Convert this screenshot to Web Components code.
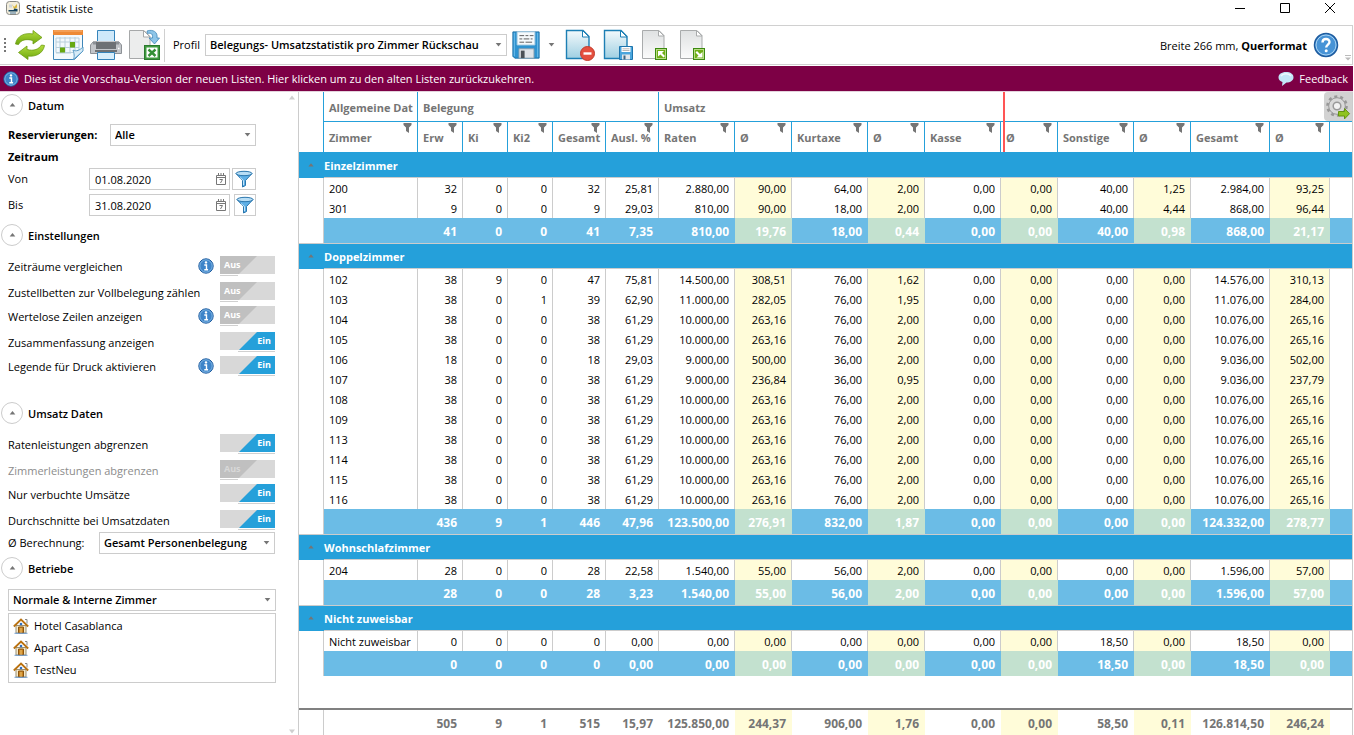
<!DOCTYPE html>
<html lang="de">
<head>
<meta charset="utf-8">
<title>Statistik Liste</title>
<style>
  html, body { margin: 0; height: 100%; }
  body { font: 11px/16px "Open Sans", "Noto Sans", sans-serif; color: #000; background: #fff; }
</style>
</head>
<body>
<statistics-app></statistics-app>

<script>
const base = `
  *, *::before, *::after { box-sizing: border-box; }
  button, input, select { font: inherit; color: inherit; margin: 0; }
  button { border: 0; padding: 0; background: none; display: flex; align-items: center; justify-content: center; cursor: pointer; }
`;

function define(name, html, setup) {
  const template = document.createElement('template');
  template.innerHTML = html;
  customElements.define(name, class extends HTMLElement {
    connectedCallback() {
      if (this.shadowRoot) return;
      const root = this.attachShadow({ mode: 'open' });
      root.append(template.content.cloneNode(true));
      if (setup) setup(this, root);
    }
  });
}

/* ---------- Icons ---------- */
const bluePage = `<path d="M2.500 1.500H19l6 6V29.500H2.500z" fill="url(#pg)" stroke="#1d7fb4" stroke-width="1.400"/><path d="M18.500 1.500v6.500H25z" fill="#fff" stroke="#1d7fb4"/>
  <defs><linearGradient id="pg" x1="0" y1="0" x2="0" y2="1"><stop offset="0" stop-color="#f4fafc"/><stop offset="1" stop-color="#9fcfe2"/></linearGradient></defs>`;
const grayPage = `<path d="M2.500 1.500H19l5 5V29.500H2.500z" fill="url(#gp)" stroke="#a9abac"/><path d="M18.500 1.500V7H24z" fill="#fff" stroke="#a9abac"/>
  <defs><linearGradient id="gp" x1="0" y1="0" x2="0" y2="1"><stop offset="0" stop-color="#dfe1e2"/><stop offset="1" stop-color="#fbfbfb"/></linearGradient></defs>`;
const ICONS = {
  app: ['0 0 14 14', `<rect x=".5" y=".5" width="13" height="13" rx="3" fill="#f3eedc" stroke="#8b8b86"/><path d="M3 3.500h3v3H3z" fill="#cfd6da"/><path d="M6 3l2 3 3-3v3.500L8 8z" fill="#d9b73c"/><path d="M2.500 9h5l1-1.500 3 .5v2.500h-9z" fill="#15425f"/><path d="M4 12h6" stroke="#4a79a0"/>`],
  refresh: ['0 0 32 32', `<defs><linearGradient id="g" x1="0" y1="0" x2="0" y2="1"><stop offset="0" stop-color="#b5de3f"/><stop offset="1" stop-color="#6ea80e"/></linearGradient></defs>
    <path d="M1.500 15C3 6.500 11 3.500 19 5V1.500l9 7-9 6.500v-3.500C12 9.500 6.500 11 4.500 15.500z" fill="url(#g)" stroke="#6c9c12" stroke-width=".8" stroke-linejoin="round"/>
    <path d="M30.500 16.500C29 25 21 28 14 27v3.500L4.500 23.500 13 17v3.500c7 2 12-.5 14.500-4.500z" fill="url(#g)" stroke="#6c9c12" stroke-width=".8" stroke-linejoin="round"/>`],
  calendar: ['0 0 32 32', `<path d="M1.500 4.500h29v18l-8 8h-21z" fill="#f3f9fd" stroke="#3f86b8"/><rect x="1" y="1" width="30" height="5" fill="#ee8a36"/><path d="M2 2h28" stroke="#f8b377"/>
    <path d="M4 9h23v14.500H4zM8 8v16M13 8v16M18 8v16M23 8v16M4 13h23M4 18.500h23M4 24h15" fill="none" stroke="#b9cfdc"/>
    <rect x="8" y="18.500" width="5" height="5" fill="#67a812"/><rect x="18" y="13" width="5" height="5.500" fill="#67a812"/>
    <path d="M21 31c2-3 1-7 0-10 3 2 7 0 10-3v4z" fill="#d7ebf7" stroke="#5b9cc8"/>`],
  printer: ['0 0 32 32', `<path d="M7.500 12V1.500h17V12" fill="#cfe9fa" stroke="#3584bb"/><path d="M3 13h26l2.500 3v8.500H.5V16z" fill="#c3c6ca" stroke="#8d9196"/>
    <path d="M3 12.500h4v3H3zM25 12.500h4v3h-4z" fill="#8b9095"/><path d="M6 13h20v7H6z" fill="#6d7175"/><path d="M5 22h22" stroke="#6d7175" stroke-width="2"/><path d="M7.500 23.500h17v7h-17z" fill="#d8eefb" stroke="#3584bb"/><path d="M28 19.500h1.500" stroke="#fff" stroke-width="1.500"/>`],
  excel: ['0 0 32 32', `<path d="M1.500 1.500H16l6 6V29.500H1.500z" fill="#eceded" stroke="#a6a8a9"/><path d="M15.500 1.500V8H22z" fill="#fff" stroke="#a6a8a9"/>
    <path d="M19 2c6-2 11 1 10 7h2.500L26.500 15 21 9h3.500c.5-4-1.500-5.500-5-4.500z" fill="#8ec5e8" stroke="#3f86b8" stroke-width=".8"/>
    <rect x="16.500" y="16.500" width="15" height="14" fill="#3f9a3f" stroke="#2b7a2e"/><rect x="18.500" y="18.500" width="11" height="10" fill="#fff"/><path d="M20.500 20.500l7 6.500M27.500 20.500l-7 6.500" stroke="#338f35" stroke-width="2.400"/>`],
  floppy: ['0 0 32 32', `<path d="M2 2h28v28H4l-2-2z" fill="#2f93d0" stroke="#1b6fa8"/><path d="M3.500 3v25M28.500 3v26" stroke="#74c2ee"/><path d="M6.500 2h19v14h-19z" fill="#f6fafc" stroke="#a6cbe0"/>
    <path d="M9 6h5m1.500 0h3m1.500 0h4M9 9.500h3m1.500 0h6m1.500 0h2M9 13h5m1.500 0h7" stroke="#555" stroke-width="1"/>
    <path d="M8.500 20h16v10h-16z" fill="#dfe3e8" stroke="#8aa0b0"/><path d="M10.500 22h4v8h-4z" fill="#4b5157"/>`],
  pageDelete: ['0 0 32 32', bluePage + `<circle cx="23.500" cy="24.500" r="7" fill="#e4503f" stroke="#c33a2b"/><path d="M19.500 24.500h8" stroke="#fff" stroke-width="2.400"/>`],
  pageSave: ['0 0 32 32', bluePage + `<path d="M17.500 17.500h13v13h-13z" fill="#4aa5dc" stroke="#1d74ad"/><path d="M19.500 18h9v5h-9z" fill="#fff"/><path d="M20.500 19.800h7M20.500 21.500h7" stroke="#999" stroke-width=".7"/><path d="M20 25.500h8v5h-8z" fill="#e2e6ea"/><path d="M21.500 26.500h2v4h-2z" fill="#3f6680"/>`],
  pageIn: ['0 0 32 32', grayPage + `<rect x="15.500" y="19.500" width="11" height="11" fill="#6fae17" stroke="#3c8a10" stroke-width="1"/><rect x="16.500" y="20.500" width="9" height="9" fill="none" stroke="#b9dc86"/><path d="M18 22h6l-2 2 3 3-1.500 1.500-3-3-2.500 2z" fill="#fff"/>`],
  pageOut: ['0 0 32 32', grayPage + `<rect x="15.500" y="19.500" width="11" height="11" fill="#6fae17" stroke="#3c8a10" stroke-width="1"/><rect x="16.500" y="20.500" width="9" height="9" fill="none" stroke="#b9dc86"/><path d="M24.500 28.500h-6l2-2-3-3L19 22l3 3 2.500-2z" fill="#fff"/>`],
  help: ['0 0 26 26', `<circle cx="13" cy="13" r="11.500" fill="#4793d6" stroke="#1f5c9f" stroke-width="1.500"/><circle cx="13" cy="13" r="10" fill="none" stroke="#a8d2f2"/><path d="M9.500 10.500C9.500 6 16.500 6 16.500 10c0 2.500-3.300 2.700-3.300 5.500" fill="none" stroke="#fff" stroke-width="2.400"/><circle cx="13.200" cy="18.800" r="1.500" fill="#fff"/>`],
  info: ['0 0 16 16', `<circle cx="8" cy="8" r="7.200" fill="#3d84c9" stroke="#1f5c9f" stroke-width="1"/><circle cx="8" cy="8" r="6.200" fill="none" stroke="#8fc1ea" stroke-width=".8"/><circle cx="8" cy="4.400" r="1.200" fill="#fff"/><path d="M6.300 7H8.500v4.500M6.300 11.700h3.800" fill="none" stroke="#fff" stroke-width="1.400"/>`],
  bubble: ['0 0 16 16', `<path d="M8 1c4.500 0 7.500 2 7.500 5.200s-3 5.300-7 5.300L4 15l.5-4C2 10.300.5 8.500.5 6.500c0-3.200 3-5.500 7.500-5.500z" fill="#c3e6f8"/><path d="M3 5c2-3 8-3 10 0" fill="none" stroke="#eef9fe" stroke-width="1.500"/>`],
  funnel: ['0 0 18 18', `<path d="M1 3.500l6.500 7V17l3-1.500v-5l6.500-7z" fill="#5fb0e6" stroke="#2b77ae"/><ellipse cx="9" cy="3.500" rx="8" ry="2.200" fill="#b9def5" stroke="#2b77ae"/><path d="M5 7.500l3.500 3V15" fill="none" stroke="#c6e6fa"/>`],
  date: ['0 0 12 12', `<path d="M1.500 2.500h9v9h-9zM1.500 4.500h9" fill="none" stroke="#777"/><path d="M3.500 0v3M6 0v3M8.500 0v3" stroke="#777"/><path d="M4.500 6.500h3L5.500 10" fill="none" stroke="#777"/>`],
  house: ['0 0 16 16', `<path d="M3 7.500h10V15H3z" fill="#f6e9c8" stroke="#999077"/><path d="M.8 8.500L8 1.500l7.200 7" fill="none" stroke="#b9710f" stroke-width="1.800"/><path d="M12 1.500h2v4" fill="none" stroke="#888"/><circle cx="8" cy="6" r="1.300" fill="#2f6fc0"/><path d="M5.500 9h5v6h-5z" fill="#c98420" stroke="#8b5410"/><path d="M8 10v5" stroke="#f0c675"/><path d="M1.500 15.300h13" stroke="#6d9ccf"/>`],
  gear: ['0 0 28 28', `<circle cx="13" cy="13" r="9.300" fill="none" stroke="#989898" stroke-width="3" stroke-dasharray="2.900 2.943"/><circle cx="13" cy="13" r="8.300" fill="#d9d9d9" stroke="#989898"/><circle cx="13" cy="13" r="3.800" fill="#f2f2f2" stroke="#999" stroke-width="1.500"/><path d="M14.500 18.500h6V15.500l5 5.200-5 5.200V23h-6z" fill="#8fc31f" stroke="#659310"/>`],
  filter: ['0 0 9 10', `<path d="M.5 0h8v2L6 4.500V10L3 8V4.500L.5 2z" fill="#757575"/>`],
  down: ['0 0 8 5', `<path d="M.5 0h7L4 4.500z" fill="#757575"/>`],
  up: ['0 0 8 5', `<path d="M.5 4.500h7L4 0z" fill="#757575"/>`],
  upLight: ['0 0 8 5', `<path d="M1 4.500h6L4 .5z" fill="#cfcfcf"/>`],
  downLight: ['0 0 8 5', `<path d="M1 .5h6L4 4.500z" fill="#cfcfcf"/>`],
  more: ['0 0 8 6', `<path d="M1 .5h6" stroke="#bbb"/><path d="M1 2.500h6L4 5.500z" fill="#bbb"/>`],
  minimize: ['0 0 12 12', `<path d="M1 6.500h10" stroke="#000"/>`],
  maximize: ['0 0 12 12', `<path d="M1.500 1.500h9v9h-9z" fill="none" stroke="#000"/>`],
  close: ['0 0 12 12', `<path d="M1 1l10 10M11 1L1 11" stroke="#000"/>`]
};
define('ui-icon', `<style>:host{display:inline-flex;flex:none} svg{display:block;width:100%;height:100%}</style>`, (host, root) => {
  const [box, shape] = ICONS[host.getAttribute('name')];
  const [w, h] = (host.getAttribute('size') || box.split(' ').slice(2).join(' ')).split(' ');
  host.style.width = w + 'px';
  host.style.height = (h || w) + 'px';
  root.innerHTML += `<svg viewBox="${box}" aria-hidden="true">${shape}</svg>`;
});

/* ---------- Form pieces ---------- */
define('select-field', `<style>${base}
  :host { display: block; }
  .box { display: flex; align-items: center; border: 1px solid #ccc; background: #fff; height: 22px; position: relative; }
  select { appearance: none; border: 0; background: none; width: 100%; height: 20px; padding: 0 16px 0 4px; outline: 0; font-weight: 600; }
  ui-icon { position: absolute; right: 4px; pointer-events: none; }
  </style><div class="box"><select><option></option></select><ui-icon name="down" size="7 4"></ui-icon></div>`,
  (host, root) => {
    root.querySelector('option').textContent = host.getAttribute('value');
    root.querySelector('select').setAttribute('aria-label', host.getAttribute('label'));
  });

define('date-row', `<style>${base}
  :host { display: flex; align-items: center; height: 22px; }
  label { flex: 1; }
  .box { display: flex; align-items: center; width: 141px; height: 22px; border: 1px solid #ccc; padding-right: 2px; }
  input { flex: 1; min-width: 0; border: 0; outline: 0; height: 20px; padding: 0 5px; background: none; }
  .funnel { width: 24px; height: 22px; border: 1px solid #ccc; margin-left: 2px; }
  :host([narrow]) .funnel { width: 22px; margin-left: 4px; }
  </style><label for="d"></label><div class="box"><input id="d" type="text"><button aria-label="Kalender"><ui-icon name="date"></ui-icon></button></div><button class="funnel" aria-label="Filter"><ui-icon name="funnel"></ui-icon></button>`,
  (host, root) => {
    root.querySelector('label').textContent = host.getAttribute('label');
    root.querySelector('input').value = host.getAttribute('value');
  });

define('switch-row', `<style>${base}
  :host { display: flex; align-items: flex-start; }
  label { flex: 1; line-height: 26px; white-space: nowrap; }
  :host([disabled]) label { color: #8c8c8c; }
  ui-icon { margin: 4px 6px 0 0; }
  .switch { position: relative; width: 55px; height: 18px; margin-top: 2px; flex: none; color: #fff; background: #d8d8d8; font-size: 9px; font-weight: 700; line-height: 18px; }
  .fill { position: absolute; inset: 0; background: #c0c0c0; clip-path: polygon(0 0, 37px 0, 19px 18px, 0 18px); padding-left: 4px; }
  .fill span { display: block; }
  :host([disabled]) .fill span { color: #d8d8d8; }
  .switch::after { content: ""; position: absolute; left: 0; top: 19px; width: 18px; height: 1px; background: #d0d0d0; }
  :host([on]) .fill { background: #25a0da; clip-path: polygon(37px 0, 55px 0, 55px 18px, 19px 18px); padding: 0 4px 0 0; }
  :host([on]) .fill span { text-align: right; }
  :host([on]) .switch::after { left: 18px; width: 37px; }
  input { appearance: none; position: absolute; inset: 0; width: 55px; height: 18px; z-index: 1; }
  </style><label for="s"></label><div class="switch"><div class="fill"><span></span></div><input id="s" type="checkbox" role="switch"></div>`,
  (host, root) => {
    const on = host.hasAttribute('on');
    root.querySelector('label').textContent = host.getAttribute('label');
    root.querySelector('span').textContent = on ? 'Ein' : 'Aus';
    const input = root.querySelector('input');
    input.checked = on;
    input.disabled = host.hasAttribute('disabled');
    input.onchange = () => { host.toggleAttribute('on', input.checked); root.querySelector('span').textContent = input.checked ? 'Ein' : 'Aus'; };
    if (host.hasAttribute('info')) {
      const icon = document.createElement('ui-icon');
      icon.setAttribute('name', 'info');
      root.querySelector('.switch').before(icon);
    }
  });

define('panel-section', `<style>${base}
  :host { display: block; }
  header { display: flex; align-items: center; gap: 5px; height: 22px; padding-left: 1px; }
  button { width: 22px; height: 22px; border: 1px solid #ccc; border-radius: 50%; }
  h2 { margin: 0; padding-top: 2px; font-size: 11px; line-height: 16px; font-weight: 600; }
  .body { padding: 8px 0 0 8px; }
  </style><header><button aria-label="Ein- oder ausklappen"><ui-icon name="up" size="7 4"></ui-icon></button><h2></h2></header><div class="body"><slot></slot></div>`,
  (host, root) => {
    root.querySelector('h2').textContent = host.getAttribute('heading');
    root.querySelector('button').onclick = () => root.querySelector('.body').toggleAttribute('hidden');
  });

/* ---------- Bars ---------- */
define('title-bar', `<style>${base}
  :host { display: flex; align-items: flex-start; height: 25px; padding: 1px 9px 0 6px; }
  h1 { margin: 0 0 0 6px; flex: 1; font-size: 11px; font-weight: 400; line-height: 16px; }
  nav { display: flex; gap: 17px; }
  button { width: 28px; height: 14px; }
  </style><ui-icon name="app"></ui-icon><h1>Statistik Liste</h1>
  <nav><button aria-label="Minimieren"><ui-icon name="minimize"></ui-icon></button><button aria-label="Maximieren"><ui-icon name="maximize"></ui-icon></button><button aria-label="Schließen"><ui-icon name="close"></ui-icon></button></nav>`);

define('tool-bar', `<style>${base}
  :host { display: flex; align-items: center; height: 40px; border: 1px solid #d0d0d0; border-width: 1px 1px 1px 0; padding: 0 4px; position: relative; white-space: nowrap; }
  .grip { width: 2px; height: 14px; margin-right: 8px; background: repeating-linear-gradient(#777 0 2px, transparent 2px 4px); }
  .group { display: flex; align-items: center; gap: 6px; }
  .sep { width: 1px; height: 33px; background: #d0d0d0; margin: 0 8px 0 4px; }
  select-field { width: 302px; margin: 0 4px 0 5px; }
  .menu { width: 16px; height: 30px; margin: 0 4px 0 3px; }
  .status { margin: 0 6px 0 auto; padding-top: 2px; }
  .status b { font-weight: 700; }
  .help { margin-right: 9px; }
  .more { position: absolute; right: 0; bottom: 3px; }
  </style><div class="grip"></div>
  <div class="group"><button aria-label="Aktualisieren"><ui-icon name="refresh"></ui-icon></button><button aria-label="Kalender"><ui-icon name="calendar"></ui-icon></button><button aria-label="Drucken"><ui-icon name="printer"></ui-icon></button><button aria-label="Excel-Export"><ui-icon name="excel"></ui-icon></button></div>
  <div class="sep"></div><span>Profil</span>
  <select-field label="Profil" value="Belegungs- Umsatzstatistik pro Zimmer Rückschau"></select-field>
  <button aria-label="Speichern"><ui-icon name="floppy" size="30"></ui-icon></button>
  <button class="menu" aria-label="Speicheroptionen"><ui-icon name="down" size="7 4"></ui-icon></button>
  <div class="group"><button aria-label="Profil löschen"><ui-icon name="pageDelete"></ui-icon></button><button aria-label="Profil speichern"><ui-icon name="pageSave"></ui-icon></button><button aria-label="Profil importieren"><ui-icon name="pageIn"></ui-icon></button><button aria-label="Profil exportieren"><ui-icon name="pageOut"></ui-icon></button></div>
  <span class="status">Breite 266 mm, <b>Querformat</b></span>
  <button class="help" aria-label="Hilfe"><ui-icon name="help"></ui-icon></button>
  <ui-icon class="more" name="more"></ui-icon>`);

define('notice-bar', `<style>${base}
  :host { display: flex; align-items: center; height: 25px; margin-top: 1px; padding: 0 5px 0 3px; background: #7d0045; color: #fff; }
  a { display: flex; align-items: center; gap: 5px; color: inherit; text-decoration: none; white-space: nowrap; }
  a:last-child { margin-left: auto; }
  </style><a href="#alte-listen"><ui-icon name="info"></ui-icon>Dies ist die Vorschau-Version der neuen Listen. Hier klicken um zu den alten Listen zurückzukehren.</a>
  <a href="#feedback"><ui-icon name="bubble"></ui-icon>Feedback</a>`);

/* ---------- Side panel ---------- */
define('side-panel', `<style>${base}
  :host { display: flex; width: 299px; flex: none; border-right: 1px solid #ccc; }
  .content { flex: 1; padding-top: 2px; min-width: 0; }
  .scroll { width: 16px; display: flex; flex-direction: column; justify-content: space-between; align-items: center; padding: 3px 0 1px 4px; }
  .date { width: 248px; }
  .row { display: flex; align-items: center; justify-content: space-between; }
  .row select-field { width: 146px; }
  h3 { margin: 0; font-size: 11px; line-height: 22px; font-weight: 700; }
  b { font-weight: 700; }
  .rows { display: grid; width: 267px; grid-auto-rows: 26px 24px; }
  .calc { display: flex; width: 267px; justify-content: space-between; align-items: center; }
  .calc select-field { width: 176px; }
  date-row + date-row { margin-top: 4px; }
  panel-section + panel-section { margin-top: 8px; }
  #revenue { margin-top: 22px; }
  #hotels { margin-top: 3px; }
  .hotels { width: 268px; padding-top: 2px; }
  ul { height: 70px; margin: 2px 0 0; padding: 1px 4px; border: 1px solid #ccc; list-style: none; }
  li { display: flex; align-items: center; gap: 5px; height: 22px; }
  </style>
  <div class="content">
    <panel-section heading="Datum"><div class="date">
      <div class="row"><b>Reservierungen:</b><select-field label="Reservierungen" value="Alle"></select-field></div>
      <h3>Zeitraum</h3>
      <date-row label="Von" value="01.08.2020"></date-row>
      <date-row narrow label="Bis" value="31.08.2020"></date-row>
    </div></panel-section>
    <panel-section heading="Einstellungen"><div class="rows">
      <switch-row info label="Zeiträume vergleichen"></switch-row>
      <switch-row label="Zustellbetten zur Vollbelegung zählen"></switch-row>
      <switch-row info label="Wertelose Zeilen anzeigen"></switch-row>
      <switch-row on label="Zusammenfassung anzeigen"></switch-row>
      <switch-row on info label="Legende für Druck aktivieren"></switch-row>
    </div></panel-section>
    <panel-section id="revenue" heading="Umsatz Daten"><div class="rows">
      <switch-row on label="Ratenleistungen abgrenzen"></switch-row>
      <switch-row disabled label="Zimmerleistungen abgrenzen"></switch-row>
      <switch-row on label="Nur verbuchte Umsätze"></switch-row>
      <switch-row on label="Durchschnitte bei Umsatzdaten"></switch-row>
    </div>
      <div class="calc"><span>Ø Berechnung:</span><select-field label="Ø Berechnung" value="Gesamt Personenbelegung"></select-field></div>
    </panel-section>
    <panel-section id="hotels" heading="Betriebe"><div class="hotels">
      <select-field label="Betriebe" value="Normale &amp; Interne Zimmer"></select-field>
      <ul><li><ui-icon name="house"></ui-icon>Hotel Casablanca</li><li><ui-icon name="house"></ui-icon>Apart Casa</li><li><ui-icon name="house"></ui-icon>TestNeu</li></ul>
    </div></panel-section>
  </div>
  <div class="scroll"><ui-icon name="upLight"></ui-icon><ui-icon name="downLight"></ui-icon></div>`);

/* ---------- Statistics table ---------- */
const COLUMNS = ['Zimmer', 'Erw', 'Ki', 'Ki2', 'Gesamt', 'Ausl. %', 'Raten', 'Ø', 'Kurtaxe', 'Ø', 'Kasse', 'Ø', 'Sonstige', 'Ø', 'Gesamt', 'Ø'];
const WIDTHS = [25, 94, 45, 45, 45, 53, 53, 76, 57, 76, 57, 76, 57, 76, 57, 79, 60];
const standard = n => `${n} 38 0 0 38 61,29 10.000,00 263,16 76,00 2,00 0,00 0,00 0,00 0,00 10.076,00 265,16`;
const GROUPS = [
  { name: 'Einzelzimmer',
    rows: ['200 32 0 0 32 25,81 2.880,00 90,00 64,00 2,00 0,00 0,00 40,00 1,25 2.984,00 93,25',
           '301 9 0 0 9 29,03 810,00 90,00 18,00 2,00 0,00 0,00 40,00 4,44 868,00 96,44'],
    total: '41 0 0 41 7,35 810,00 19,76 18,00 0,44 0,00 0,00 40,00 0,98 868,00 21,17' },
  { name: 'Doppelzimmer',
    rows: ['102 38 9 0 47 75,81 14.500,00 308,51 76,00 1,62 0,00 0,00 0,00 0,00 14.576,00 310,13',
           '103 38 0 1 39 62,90 11.000,00 282,05 76,00 1,95 0,00 0,00 0,00 0,00 11.076,00 284,00',
           standard(104), standard(105),
           '106 18 0 0 18 29,03 9.000,00 500,00 36,00 2,00 0,00 0,00 0,00 0,00 9.036,00 502,00',
           '107 38 0 0 38 61,29 9.000,00 236,84 36,00 0,95 0,00 0,00 0,00 0,00 9.036,00 237,79',
           ...[108, 109, 113, 114, 115, 116].map(standard)],
    total: '436 9 1 446 47,96 123.500,00 276,91 832,00 1,87 0,00 0,00 0,00 0,00 124.332,00 278,77' },
  { name: 'Wohnschlafzimmer',
    rows: ['204 28 0 0 28 22,58 1.540,00 55,00 56,00 2,00 0,00 0,00 0,00 0,00 1.596,00 57,00'],
    total: '28 0 0 28 3,23 1.540,00 55,00 56,00 2,00 0,00 0,00 0,00 0,00 1.596,00 57,00' },
  { name: 'Nicht zuweisbar',
    rows: ['Nicht_zuweisbar 0 0 0 0 0,00 0,00 0,00 0,00 0,00 0,00 0,00 18,50 0,00 18,50 0,00'],
    total: '0 0 0 0 0,00 0,00 0,00 0,00 0,00 0,00 0,00 18,50 0,00 18,50 0,00' }
];
const SUMMARY = '505 9 1 515 15,97 125.850,00 244,37 906,00 1,76 0,00 0,00 58,50 0,11 126.814,50 246,24';

define('stat-table', `<style>${base}
  :host { display: flex; flex-direction: column; flex: 1; min-width: 0; position: relative; border-right: 1px solid #ccc; }
  .scroll { flex: 1; min-height: 0; overflow: hidden; }
  table { table-layout: fixed; border-collapse: separate; border-spacing: 0; width: 100%; }
  th, td { padding: 2px 5px 0; text-align: right; white-space: nowrap; overflow: hidden; border-right: 1px solid #ccc; font-weight: 400; line-height: 16px; }
  th:last-child, td:last-child { border-right: 0; }
  .l { text-align: left; }
  thead th { position: relative; height: 30px; color: #757575; font-size: 11px; font-weight: 700; text-align: left; border-right-color: #25a0da; }
  thead tr:first-child th + th { border-bottom: 1px solid #25a0da; }
  thead th ui-icon { position: absolute; top: 1px; right: 5px; }
  .data td { height: 20px; }
  .avg { background: #fffcd9; }
  .total td { height: 25px; background: #6bbce6; color: #fff; font-size: 12px; font-weight: 700; border-right-color: transparent; }
  .total td.avg { background: #c3e1cf; }
  .total td:first-child { background: #fff; border-right-color: #ccc; }
  .group th { height: 26px; background: #25a0da; color: #fff; font-size: 11px; font-weight: 700; text-align: left; border-right: 0; border-bottom: 1px solid #ccc; padding: 2px 0 0; overflow: visible; }
  .group th:first-child { border-bottom-color: #25a0da; padding: 0; }
  tbody + tbody .group th { border-top: 1px solid #ccc; }
  .group button { width: 24px; height: 20px; }
  .sum { border-top: 2px solid #808080; }
  .sum td { height: 25px; color: #757575; font-size: 12px; font-weight: 700; border-right-color: transparent; }
  .sum td:first-child { border-right-color: #ccc; }
  .marker { position: absolute; left: 704px; top: 0; width: 2px; height: 60px; background: #ff5555; }
  .settings { position: absolute; right: 0; top: 0; width: 28px; height: 29px; background: #d2d2d2; border-radius: 4px 0 0 4px; }
  </style>
  <div class="scroll"><table class="main"></table></div>
  <div class="sum"><table class="foot"></table></div>
  <div class="marker"></div>
  <button class="settings" aria-label="Spalten einstellen"><ui-icon name="gear"></ui-icon></button>`,
  (host, root) => {
    const cols = `<colgroup>${WIDTHS.map(w => `<col style="width:${w}px">`).join('')}<col></colgroup>`;
    const cells = line => line.split(' ').map((v, i) => `<td class="${i === 0 ? 'l' : COLUMNS[i] === 'Ø' ? 'avg' : ''}">${v.replace('_', ' ')}</td>`).join('');
    const head = `<thead><tr><th></th><th scope="colgroup">Allgemeine Dat</th><th scope="colgroup" colspan="5">Belegung</th><th scope="colgroup" colspan="11">Umsatz</th></tr>
      <tr><th></th>${COLUMNS.map(c => `<th scope="col">${c}<ui-icon name="filter"></ui-icon></th>`).join('')}<th></th></tr></thead>`;
    const bodies = GROUPS.map(g => `<tbody>
      <tr class="group"><th><button aria-label="${g.name} einklappen"><ui-icon name="up" size="6 4"></ui-icon></button></th><th scope="rowgroup" colspan="17">${g.name}</th></tr>
      ${g.rows.map(r => `<tr class="data"><td></td>${cells(r)}<td></td></tr>`).join('')}
      <tr class="total"><td></td>${cells(' ' + g.total)}<td></td></tr></tbody>`).join('');
    root.querySelector('.main').innerHTML = cols + head + bodies;
    root.querySelector('.foot').innerHTML = cols + `<tbody><tr><td></td>${cells(' ' + SUMMARY)}<td></td></tr></tbody>`;
  });

define('statistics-app', `<style>${base}
  :host { display: flex; flex-direction: column; height: 100vh; overflow: hidden; padding-right: 1px; }
  main { display: flex; flex: 1; min-height: 0; border-top: 1px solid #e3d3dc; }
  </style><title-bar></title-bar><tool-bar></tool-bar><notice-bar></notice-bar><main><side-panel></side-panel><stat-table></stat-table></main>`);
</script>
</body>
</html>
